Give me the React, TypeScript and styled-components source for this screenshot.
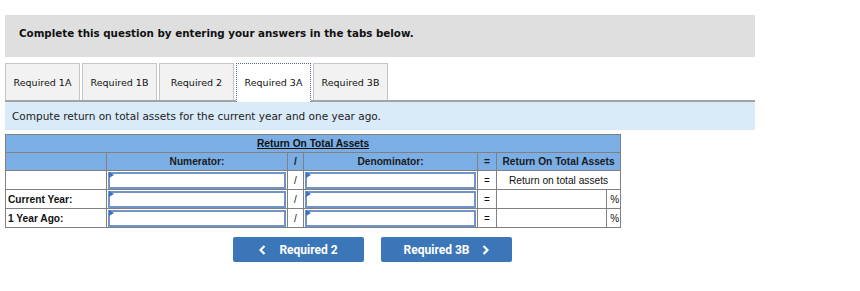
import styled, { createGlobalStyle } from "styled-components";

const GlobalStyle = createGlobalStyle`
  body {
    margin: 0;
    background: #ffffff;
    font-family: "DejaVu Sans", Verdana, sans-serif;
  }
`;

const tabs = ["Required 1A", "Required 1B", "Required 2", "Required 3A", "Required 3B"];
const activeTab = "Required 3A";

const rows = [
  { label: "", result: "text" },
  { label: "Current Year:", result: "percent" },
  { label: "1 Year Ago:", result: "percent" },
];

function InputBox() {
  return (
    <InputWrap>
      <Marker />
    </InputWrap>
  );
}

function Chevron({ dir }: { dir: "left" | "right" }) {
  return (
    <svg width="7" height="10" viewBox="0 0 7 10">
      <polyline
        points={dir === "left" ? "5.5,1 1.5,5 5.5,9" : "1.5,1 5.5,5 1.5,9"}
        fill="none"
        stroke="#ffffff"
        strokeWidth="2.2"
      />
    </svg>
  );
}

function App() {
  return (
    <Page>
      <GlobalStyle />
      <Banner>Complete this question by entering your answers in the tabs below.</Banner>
      <TabBar>
        {tabs.map((tab) => (
          <Tab key={tab} $active={tab === activeTab}>
            {tab}
          </Tab>
        ))}
      </TabBar>
      <Instruction>Compute return on total assets for the current year and one year ago.</Instruction>
      <Grid>
        <colgroup>
          <col style={{ width: 101 }} />
          <col style={{ width: 181 }} />
          <col style={{ width: 16 }} />
          <col style={{ width: 174 }} />
          <col style={{ width: 19 }} />
          <col style={{ width: 110 }} />
          <col style={{ width: 14 }} />
        </colgroup>
        <tbody>
          <tr>
            <TitleCell colSpan={7}>Return On Total Assets</TitleCell>
          </tr>
          <tr>
            <HeadCell />
            <HeadCell>Numerator:</HeadCell>
            <HeadCell>/</HeadCell>
            <HeadCell>Denominator:</HeadCell>
            <HeadCell>=</HeadCell>
            <HeadCell colSpan={2}>Return On Total Assets</HeadCell>
          </tr>
          {rows.map((row, i) => (
            <tr key={i}>
              <LabelCell>{row.label}</LabelCell>
              <InputCell>
                <InputBox />
              </InputCell>
              <SignCell>/</SignCell>
              <InputCell>
                <InputBox />
              </InputCell>
              <SignCell>=</SignCell>
              {row.result === "text" ? (
                <ResultCell colSpan={2}>Return on total assets</ResultCell>
              ) : (
                <>
                  <ResultCell />
                  <PercentCell>%</PercentCell>
                </>
              )}
            </tr>
          ))}
        </tbody>
      </Grid>
      <NavRow>
        <NavButton>
          <Chevron dir="left" />
          Required 2
        </NavButton>
        <NavButton>
          Required 3B
          <Chevron dir="right" />
        </NavButton>
      </NavRow>
    </Page>
  );
}

export default App;

const Page = styled.div`
  width: 750px;
  padding: 15px 0 0 5px;
`;

const Banner = styled.div`
  height: 42px;
  box-sizing: border-box;
  display: flex;
  align-items: center;
  padding: 0 0 7px 14px;
  background: #dfdfdf;
  font-weight: bold;
  font-size: 10.3px;
  color: #111111;
`;

const TabBar = styled.div`
  display: flex;
  gap: 2px;
  margin-top: 6px;
  border-bottom: 2px solid #a3a3a3;
`;

const Tab = styled.div<{ $active: boolean }>`
  width: 75px;
  box-sizing: border-box;
  display: flex;
  align-items: center;
  justify-content: center;
  font-size: 9.5px;
  color: #111111;
  background: ${(p) => (p.$active ? "#ffffff" : "#f2f2f2")};
  border: ${(p) => (p.$active ? "1px dotted #4d6e9a" : "1px solid #c6c6c6")};
  border-bottom: none;
  margin-bottom: ${(p) => (p.$active ? "-2px" : "0")};
  height: ${(p) => (p.$active ? "39px" : "37px")};
  padding-bottom: ${(p) => (p.$active ? "2px" : "0")};
`;

const Instruction = styled.div`
  height: 28px;
  display: flex;
  align-items: center;
  padding-left: 7px;
  background: #d9eaf8;
  font-size: 10.5px;
  color: #222222;
`;

const Grid = styled.table`
  margin-top: 4px;
  width: 615px;
  border-collapse: collapse;
  table-layout: fixed;
  font-family: "Liberation Sans", Arial, sans-serif;
  font-size: 10.2px;
  color: #111111;

  td {
    border: 1px solid #808080;
    padding: 0;
  }
`;

const TitleCell = styled.td`
  height: 17px;
  background: #7aaee4;
  text-align: center;
  font-weight: bold;
  text-decoration: underline;
`;

const HeadCell = styled.td`
  height: 17px;
  background: #7aaee4;
  text-align: center;
  font-weight: bold;
  color: #1b1b1b;
`;

const LabelCell = styled.td`
  padding-left: 2px !important;
  font-weight: bold;
`;

const InputCell = styled.td`
  padding: 1px 1px 0 !important;
`;

const InputWrap = styled.div`
  position: relative;
  height: 13px;
  border: 2px solid #7094c7;
  background: #ffffff;
`;

const Marker = styled.span`
  position: absolute;
  top: -2px;
  left: -1px;
  width: 0;
  height: 0;
  border-top: 3px solid transparent;
  border-bottom: 3px solid transparent;
  border-left: 5px solid #3b73c2;
`;

const SignCell = styled.td`
  text-align: center;
  font-size: 10px;
`;

const ResultCell = styled.td`
  text-align: center;
`;

const PercentCell = styled.td`
  text-align: right;
  padding-right: 1px !important;
  font-size: 10px;
`;

const NavRow = styled.div`
  display: flex;
  justify-content: center;
  gap: 17px;
  width: 735px;
  margin-top: 9px;
`;

const NavButton = styled.div`
  width: 131px;
  height: 25px;
  display: flex;
  align-items: center;
  justify-content: center;
  gap: 13px;
  background: #3a76b8;
  border-radius: 2px;
  color: #ffffff;
  font-family: Roboto, "Liberation Sans", sans-serif;
  font-weight: bold;
  font-size: 12px;
`;
